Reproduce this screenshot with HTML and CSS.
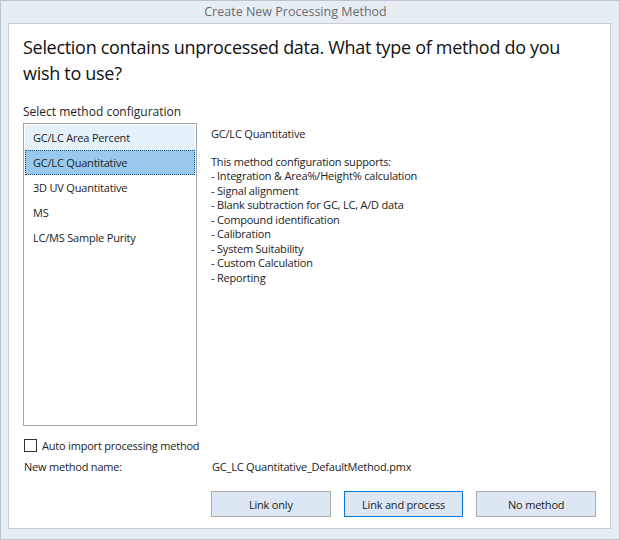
FILE: index.html
```html
<!DOCTYPE html>
<html lang="en">
<head>
    <meta charset="UTF-8">
    <title>Create New Processing Method</title>
    <link rel="stylesheet" href="styles.css">
</head>
<body>
    <div class="dialog">
        <div class="dialog-title">Create New Processing Method</div>

        <div class="dialog-body">
            <h1 class="question">Selection contains unprocessed data. What type of method do you wish to use?</h1>

            <div class="section-label">Select method configuration</div>

            <div class="config-row">
                <ul class="method-list">
                    <li class="method-item hover">GC/LC Area Percent</li>
                    <li class="method-item selected">GC/LC Quantitative</li>
                    <li class="method-item">3D UV Quantitative</li>
                    <li class="method-item">MS</li>
                    <li class="method-item">LC/MS Sample Purity</li>
                </ul>

                <div class="method-info">
                    <div class="info-title">GC/LC Quantitative</div>
                    <div class="info-lines">
                        <div>This method configuration supports:</div>
                        <div>- Integration &amp; Area%/Height% calculation</div>
                        <div>- Signal alignment</div>
                        <div>- Blank subtraction for GC, LC, A/D data</div>
                        <div>- Compound identification</div>
                        <div>- Calibration</div>
                        <div>- System Suitability</div>
                        <div>- Custom Calculation</div>
                        <div>- Reporting</div>
                    </div>
                </div>
            </div>

            <label class="check-row">
                <span class="check-box"></span>
                Auto import processing method
            </label>

            <div class="name-row">
                <span class="name-label">New method name:</span>
                <span class="name-value">GC_LC Quantitative_DefaultMethod.pmx</span>
            </div>

            <div class="button-row">
                <button class="btn">Link only</button>
                <button class="btn default">Link and process</button>
                <button class="btn">No method</button>
            </div>
        </div>
    </div>
</body>
</html>
```

FILE: styles.css
```css
html, body {
    margin: 0;
    padding: 0;
}

body {
    font-family: 'Open Sans', 'Noto Sans', sans-serif;
    color: #1e1e1e;
    background: #fff;
}

.dialog {
    width: 620px;
    height: 540px;
    box-sizing: border-box;
    border: 1px solid #bcc3cc;
    background: #e6edf5;
    display: flex;
    flex-direction: column;
}

.dialog-title {
    height: 22px;
    line-height: 22px;
    text-align: center;
    font-size: 12.5px;
    color: #6b6b6b;
    padding-right: 29px;
}

.dialog-body {
    margin: 0 8px 0 7px;
    height: 506px;
    box-sizing: border-box;
    border: 1px solid #c9ced5;
    background: #fff;
    padding: 10px 14px 0 14px;
    display: flex;
    flex-direction: column;
}

.question {
    margin: 0;
    font-size: 18px;
    font-weight: normal;
    line-height: 26px;
    letter-spacing: -0.3px;
    color: #111;
}

.section-label {
    margin-top: 18px;
    font-size: 12px;
    line-height: 16px;
}

.config-row {
    display: flex;
    margin-top: 3px;
    font-size: 11px;
    letter-spacing: -0.2px;
    color: #222;
}

.method-list {
    list-style: none;
    margin: 0;
    padding: 1px;
    width: 174px;
    height: 303px;
    box-sizing: border-box;
    border: 1px solid #a5a5a5;
    flex-shrink: 0;
}

.method-item {
    height: 25px;
    line-height: 25px;
    padding-left: 8px;
    box-sizing: border-box;
}

.method-item.hover {
    background: #e5f1fb;
}

.method-item.selected {
    background: #99c9ef;
    border: 1px dotted #1d4f7c;
    line-height: 23px;
    padding-left: 7px;
}

.method-info {
    margin-left: 14px;
    padding-top: 4px;
}

.info-title {
    line-height: 14.5px;
    margin-bottom: 13px;
}

.info-lines div {
    line-height: 14.5px;
}

.check-row {
    display: flex;
    align-items: center;
    margin-top: 12px;
    font-size: 11px;
    letter-spacing: -0.2px;
    color: #222;
    gap: 5px;
}

.check-box {
    width: 11px;
    height: 11px;
    border: 1px solid #333;
    background: #fff;
    margin-left: 1px;
}

.name-row {
    display: flex;
    margin-top: 6px;
    font-size: 11px;
    letter-spacing: -0.2px;
    color: #222;
    padding-left: 1px;
}

.name-label {
    width: 188px;
}

.button-row {
    display: flex;
    gap: 13px;
    margin-top: 17px;
    padding-left: 188px;
}

.btn {
    width: 120px;
    height: 26px;
    border: 1px solid #a8adb5;
    background: #dce7f3;
    font-family: 'Open Sans', 'Noto Sans', sans-serif;
    font-size: 11px;
    letter-spacing: -0.2px;
    color: #222;
    padding: 0;
}

.btn.default {
    border-color: #0a78d7;
}
```
